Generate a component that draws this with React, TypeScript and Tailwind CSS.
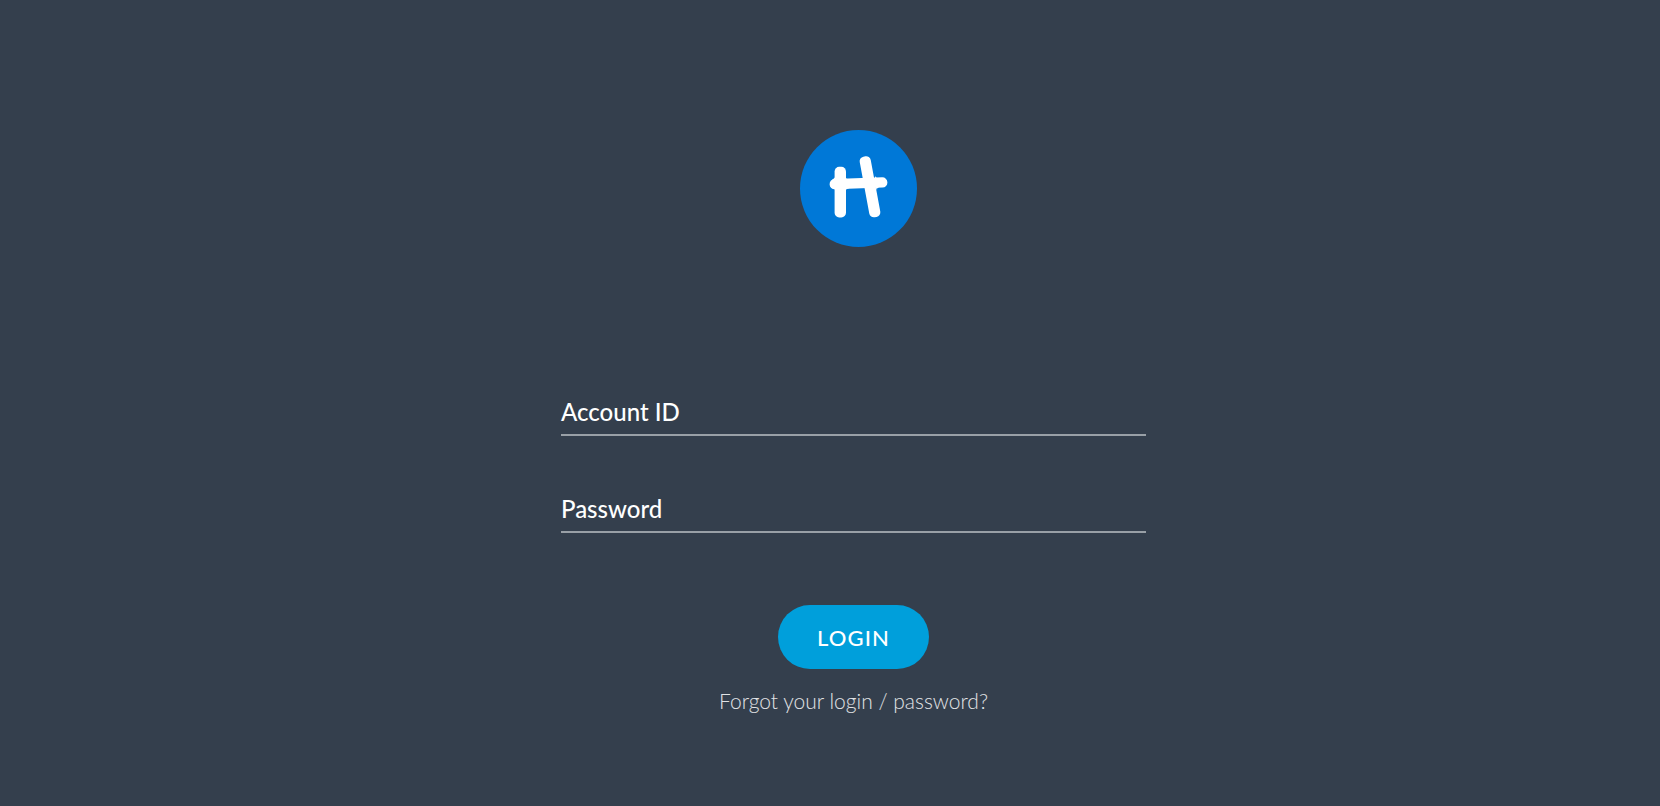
import { useState } from "react";
import type { FormEvent } from "react";

function Logo() {
  return (
    <svg viewBox="0 0 117 117" className="size-[117px]" role="img" aria-label="H">
      <circle cx="58.5" cy="58.5" r="58.5" fill="#0078d7" />
      <g fill="#fff">
        <rect x="34.6" y="36.8" width="11.4" height="50.6" rx="4.6" />
        <rect
          x="64.4"
          y="26"
          width="11.2"
          height="61.6"
          rx="4.6"
          transform="rotate(-10.5 70 56.8) "
        />
        <rect
          x="29.6"
          y="48.2"
          width="57.8"
          height="10.2"
          rx="5"
          transform="rotate(-2 58.5 53.3)"
        />
        {/* soft corners where the strokes cross */}
        <path d="M32 50 L35.500 47 L35.500 60 L32 57 Z" />
        <path d="M45 46 Q45.500 49 49 49.500 L45 51 Z" />
        <path d="M45 62 Q45.500 59 49 58.300 L45 56 Z" />
        <path d="M63.500 45.500 Q64 48.500 61 49 L65 51 Z" />
        <path d="M75 46 Q75.500 48 78 48.300 L75 50 Z" />
        <path d="M77 60 Q76.500 58 79 57.200 L75 56 Z" />
      </g>
    </svg>
  );
}

function Field({
  id,
  label,
  type,
  value,
  onChange,
}: {
  id: string;
  label: string;
  type: string;
  value: string;
  onChange: (value: string) => void;
}) {
  return (
    <div className="relative">
      <input
        id={id}
        type={type}
        value={value}
        placeholder=" "
        onChange={(e) => onChange(e.target.value)}
        className="peer block h-14 w-full border-b-2 border-[#99a0a7] bg-transparent text-2xl font-medium text-white outline-none"
      />
      <label
        htmlFor={id}
        className="pointer-events-none absolute inset-x-0 top-4 text-2xl font-medium text-white transition-all peer-focus:-top-4 peer-focus:text-base peer-[:not(:placeholder-shown)]:-top-4 peer-[:not(:placeholder-shown)]:text-base"
      >
        {label}
      </label>
    </div>
  );
}

export default function App() {
  const [accountId, setAccountId] = useState("");
  const [password, setPassword] = useState("");

  function onSubmit(e: FormEvent) {
    e.preventDefault();
  }

  return (
    <main className="flex min-h-screen flex-col items-center bg-[#343f4d] pt-[130px] pl-[47px] font-['Lato',sans-serif]">
      <div className="pl-2.5">
        <Logo />
      </div>
      <form onSubmit={onSubmit} className="mt-[133px] flex w-full max-w-[585px] flex-col">
        <Field
          id="account"
          label="Account ID"
          type="text"
          value={accountId}
          onChange={setAccountId}
        />
        <div className="mt-[41px]">
          <Field
            id="password"
            label="Password"
            type="password"
            value={password}
            onChange={setPassword}
          />
        </div>
        <div className="mt-[72px] flex flex-col items-center gap-4">
          <button
            type="submit"
            className="h-16 rounded-full bg-[#009fdb] px-[39px] pt-px text-[22px] font-medium tracking-wider text-white"
          >
            LOGIN
          </button>
          <a href="#forgot" className="text-[21px] leading-8 font-light text-[#e1e3e5]">
            Forgot your login / password?
          </a>
        </div>
      </form>
    </main>
  );
}
